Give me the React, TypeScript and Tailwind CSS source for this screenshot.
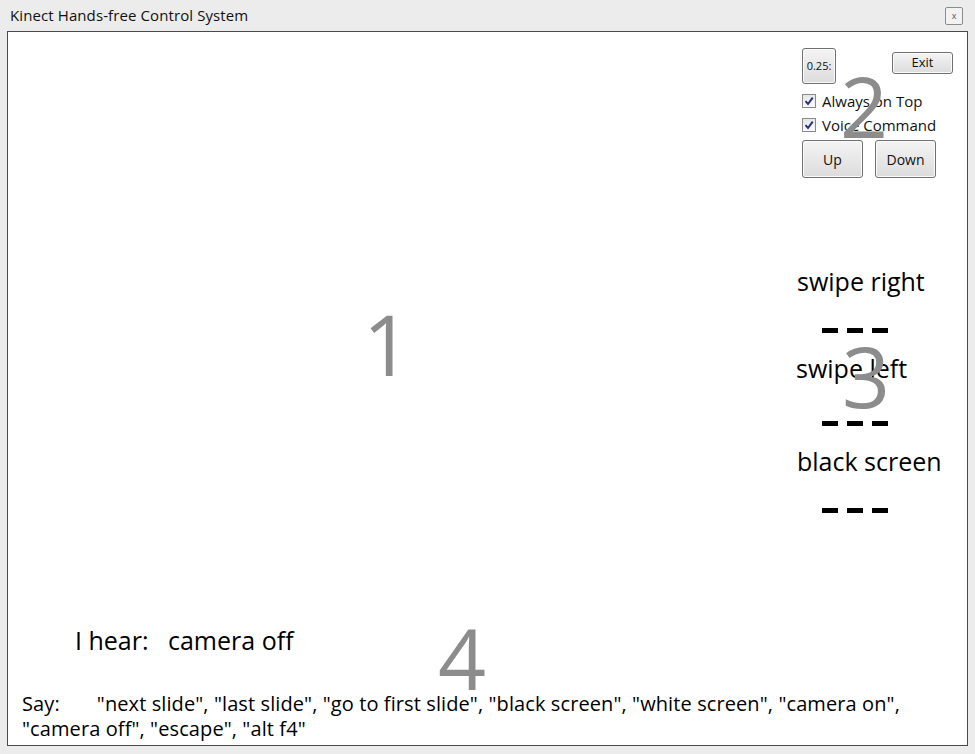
import React from 'react';

const font = { fontFamily: '"Open Sans", "Noto Sans", sans-serif' };

const WinButton = ({ label, className }: { label: string; className: string }) => (
  <div
    className={`flex items-center justify-center rounded-[3px] border border-[#707070] bg-gradient-to-b from-[#f4f4f4] to-[#dcdcdc] text-[#111] shadow-[inset_0_0_0_1px_#fbfbfb] ${className}`}
  >
    {label}
  </div>
);

const Check = ({ label }: { label: string }) => (
  <div className="flex items-center gap-[6px] h-[24px]">
    <div className="w-[14px] h-[14px] border border-[#8a8a8a] bg-gradient-to-b from-[#e6e6e6] to-[#fafafa] flex items-center justify-center">
      <svg width="10" height="10" viewBox="0 0 10 10">
        <path d="M1.5 5.2 L4 8 L8.7 1.6" fill="none" stroke="#2a2f7a" strokeWidth="2" />
      </svg>
    </div>
    <span className="text-[15px] text-[#111] leading-none">{label}</span>
  </div>
);

const Dashes = () => (
  <div className="flex gap-[9px] ml-[25px]">
    <div className="w-[16px] h-[5px] bg-black" />
    <div className="w-[16px] h-[5px] bg-black" />
    <div className="w-[16px] h-[5px] bg-black" />
  </div>
);

const App = () => {
  return (
    <div className="w-[975px] h-[754px] bg-[#ececec] flex flex-col" style={font}>
      <div className="h-[31px] flex items-center justify-between pl-[10px] pr-[12px]">
        <span className="text-[15px] text-[#111] tracking-[0.1px]">Kinect Hands-free Control System</span>
        <div className="w-[18px] h-[18px] border border-[#8c8c8c] rounded-[2px] bg-[#f2f2f2] flex items-center justify-center text-[9px] text-[#555] leading-none">
          x
        </div>
      </div>

      <div className="relative mx-[7px] h-[715px] border border-[#4a4a4a] bg-white flex flex-col">
        <div className="flex flex-1">
          <div className="flex-1" />
          <div className="w-[170px] pt-[16px] flex flex-col">
            <div className="flex items-start pl-[5px]">
              <WinButton label="0.25:" className="w-[34px] h-[36px] text-[11px]" />
              <WinButton label="Exit" className="ml-[56px] mt-[4px] w-[61px] h-[22px] text-[13px]" />
            </div>
            <div className="pl-[5px] mt-[5px] flex flex-col">
              <Check label="Always on Top" />
              <Check label="Voice Command" />
            </div>
            <div className="flex gap-[12px] pl-[5px] mt-[3px]">
              <WinButton label="Up" className="w-[61px] h-[38px] text-[14px]" />
              <WinButton label="Down" className="w-[61px] h-[38px] text-[14px]" />
            </div>

            <div className="mt-[88px] text-[25px] leading-[30px] text-black">swipe right</div>
            <div className="mt-[32px]"><Dashes /></div>
            <div className="mt-[20px] text-[25px] leading-[30px] text-black -ml-[1px]">swipe left</div>
            <div className="mt-[38px]"><Dashes /></div>
            <div className="mt-[20px] text-[25px] leading-[30px] text-black">black screen</div>
            <div className="mt-[32px]"><Dashes /></div>
          </div>
        </div>

        <div className="pl-[67px] text-[25px] leading-[30px] text-black mb-[36px]">
          I hear:&nbsp;&nbsp;&nbsp;camera off
        </div>
        <div className="pl-[14px] pb-[4px] text-[20px] leading-[25px] text-black tracking-[0.1px] whitespace-nowrap">
          Say:&nbsp;&nbsp;&nbsp;&nbsp;&nbsp;&nbsp;&nbsp;"next slide", "last slide", "go to first slide", "black screen", "white screen", "camera on",
          <br />
          "camera off", "escape", "alt f4"
        </div>

        <span className="absolute left-[355px] top-[270px] text-[84px] leading-none text-[#8c8c8c]">1</span>
        <span className="absolute left-[832px] top-[32px] text-[84px] leading-none text-[#8c8c8c]">2</span>
        <span className="absolute left-[834px] top-[302px] text-[84px] leading-none text-[#8c8c8c]">3</span>
        <span className="absolute left-[430px] top-[584px] text-[84px] leading-none text-[#8c8c8c]">4</span>
      </div>
    </div>
  );
};

export default App;
